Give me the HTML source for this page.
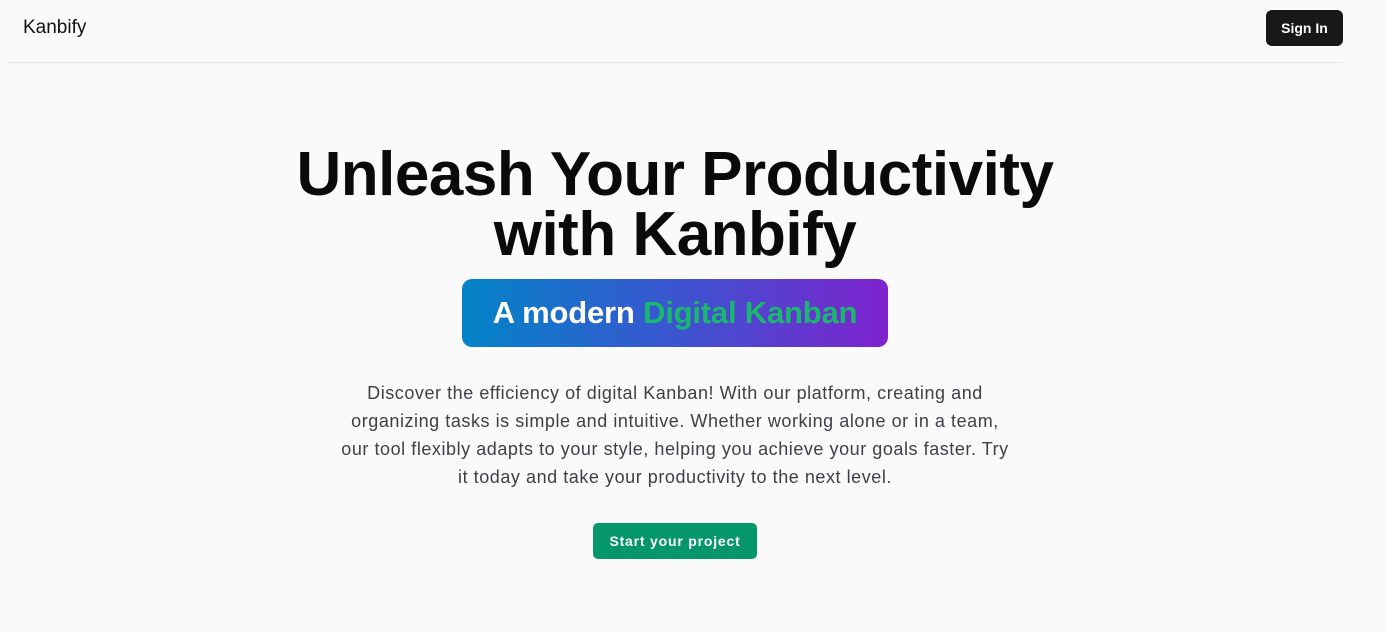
<!DOCTYPE html>
<html><head><meta charset="utf-8"><style>
body{margin:0;background:#fafafa;font-family:"Liberation Sans",sans-serif;width:1386px;height:632px;overflow:hidden;position:relative}
.hdr{position:absolute;left:7px;top:0;width:1336px;height:62px;border-bottom:1px solid #e5e5e5}
.logo{position:absolute;left:16px;top:17px;font-size:19px;color:#111}
.sign{position:absolute;left:1259px;top:10px;width:77px;height:36px;background:#18181b;color:#fff;border-radius:6px;font-size:14px;font-weight:bold;text-align:center;line-height:36px}
h1{position:absolute;left:0;width:1350px;top:145px;margin:0;text-align:center;font-size:62px;line-height:60px;font-weight:bold;color:#0a0a0a;letter-spacing:-0.5px}
.badge{position:absolute;left:462px;top:279px;width:426px;height:68px;border-radius:10px;background:linear-gradient(90deg,#0284c7,#3b55d0 50%,#7e22ce);color:#fff;font-weight:bold;font-size:31px;text-align:center;line-height:68px;letter-spacing:-0.2px}
.badge span{color:#1ab86e}
p{position:absolute;left:315px;width:720px;top:379px;margin:0;text-align:center;font-size:18px;line-height:28px;color:#3f3f46;letter-spacing:0.55px}
.btn{position:absolute;left:593px;top:523px;width:164px;height:36px;background:#059669;color:#fff;border-radius:5px;font-size:14px;font-weight:bold;text-align:center;line-height:36px;letter-spacing:0.8px}
</style></head><body>
<div class="hdr"><div class="logo">Kanbify</div><div class="sign">Sign In</div></div>
<h1>Unleash Your Productivity<br>with Kanbify</h1>
<div class="badge">A modern <span>Digital Kanban</span></div>
<p>Discover the efficiency of digital Kanban! With our platform, creating and<br>organizing tasks is simple and intuitive. Whether working alone or in a team,<br>our tool flexibly adapts to your style, helping you achieve your goals faster. Try<br>it today and take your productivity to the next level.</p>
<div class="btn">Start your project</div>
</body></html>
